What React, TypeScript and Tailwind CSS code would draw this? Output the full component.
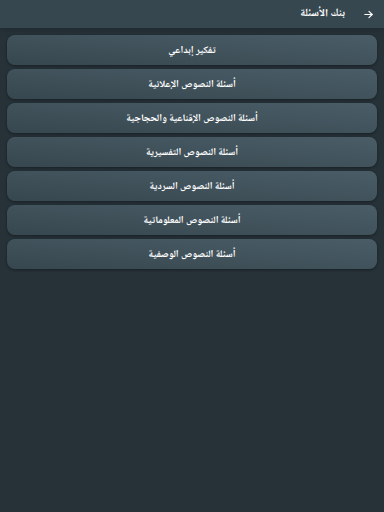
import React from 'react'

const items = [
  'تفكير إبداعي',
  'أسئلة النصوص الإعلانية',
  'أسئلة النصوص الإقناعية والحجاجية',
  'أسئلة النصوص التفسيرية',
  'أسئلة النصوص السردية',
  'أسئلة النصوص المعلوماتية',
  'أسئلة النصوص الوصفية',
]

export default function App() {
  return (
    <div
      dir="rtl"
      className="w-[384px] h-[512px] bg-[#263238] flex flex-col font-['Noto_Naskh_Arabic','DejaVu_Sans',sans-serif]"
    >
      {/* Header */}
      <div className="h-[28px] bg-[#37474f] flex items-center pr-[10px] gap-[18px] text-white shadow-md">
        <svg width="11" height="11" viewBox="0 0 24 24" fill="none" stroke="currentColor" strokeWidth="2.5" strokeLinecap="round" strokeLinejoin="round">
          <path d="M4 12h16" />
          <path d="M13 5l7 7-7 7" />
        </svg>
        <span className="text-[11px] font-bold">بنك الأسئلة</span>
      </div>

      {/* List */}
      <div className="flex flex-col gap-[4px] px-[7px] pt-[7px]">
        {items.map((t) => (
          <div
            key={t}
            className="h-[30px] rounded-[8px] bg-gradient-to-tr from-[#37474f] to-[#4a5d67] shadow-[0_1px_3px_rgba(0,0,0,0.4)] flex items-center justify-center text-[10px] font-bold text-white"
          >
            {t}
          </div>
        ))}
      </div>
    </div>
  )
}
